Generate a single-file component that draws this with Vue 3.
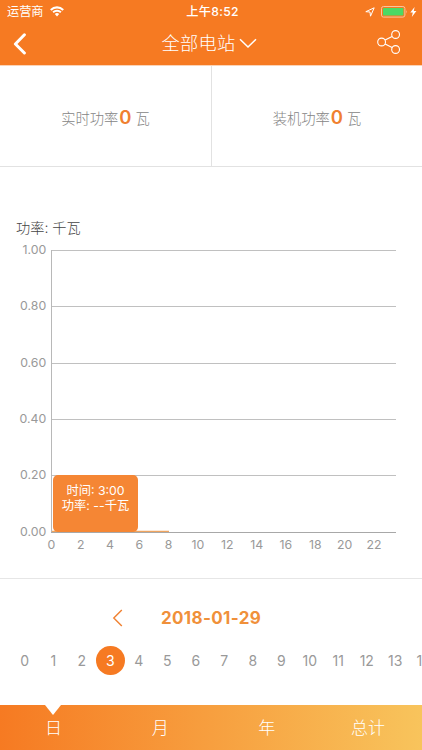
<template>
  <div class="page">
    <header class="header">
      <div class="status">
        <div class="status__left">
          <span>运营商</span>
          <svg width="14" height="11" viewBox="0 0 14 11" fill="none" stroke="#fff">
            <path d="M.8 3.9a9 9 0 0 1 12.4 0" stroke-width="2.1" />
            <path d="M3.1 6.3a5.6 5.6 0 0 1 7.8 0" stroke-width="1.9" />
            <path d="M4.8 8.1a3.1 3.1 0 0 1 4.4 0L7 10.4z" fill="#fff" stroke="none" />
          </svg>
        </div>
        <div class="status__time">上午8:52</div>
        <div class="status__right">
          <svg width="10" height="10" viewBox="0 0 10 10" fill="none" stroke="#fff" stroke-width="1">
            <path d="M.8 4.7 9.2.8 5.5 9.2 5 5z" />
          </svg>
          <svg class="battery" width="27" height="12" viewBox="0 0 27 12">
            <rect x=".5" y=".5" width="23.4" height="10.6" rx="2" fill="none" stroke="#fbc59c" />
            <rect x="2" y="2" width="20.4" height="7.6" rx=".8" fill="#4cd964" />
            <path d="M25 4q1.4 1.8 0 3.6z" fill="#fbc59c" />
          </svg>
          <svg width="7" height="10" viewBox="0 0 7 10">
            <path d="M4.6 0 .3 5.5h2.5L1.8 10l4.6-5.9H3.8z" fill="#fff" />
          </svg>
        </div>
      </div>
      <div class="nav">
        <svg class="nav__back" width="14" height="22" viewBox="0 0 14 22" fill="none" stroke="#fff">
          <path d="M11.4 1.8 2.4 11l9 9" stroke-width="3" stroke-linecap="round" stroke-linejoin="round" />
        </svg>
        <div class="nav__title">
          <span>全部电站</span>
          <svg width="18" height="11" viewBox="0 0 18 11" fill="none" stroke="#fff">
            <path d="M1 1.2 9 9l8-7.8" stroke-width="1.5" />
          </svg>
        </div>
        <svg class="nav__share" width="24" height="26" viewBox="0 0 24 26" fill="none" stroke="#fff" stroke-width="1.1">
          <circle cx="4.6" cy="13" r="3.9" />
          <circle cx="18.6" cy="5.5" r="3.9" />
          <circle cx="18.6" cy="20.5" r="3.9" />
          <path d="M8.1 11.1l7-3.7M8.1 14.9l7 3.7" />
        </svg>
      </div>
    </header>

    <section class="stats">
      <div v-for="stat in stats" :key="stat.label" class="stat">
        {{ stat.label }}<b>{{ stat.value }}</b><span>{{ stat.unit }}</span>
      </div>
    </section>

    <section class="chart">
      <div class="chart__title">功率: 千瓦</div>
      <svg class="chart__plot" width="422" height="314" viewBox="0 0 422 314">
        <g v-for="(label, i) in yLabels" :key="label">
          <line x1="51" x2="396" :y1="gridY(i)" :y2="gridY(i)" :stroke="i === 5 ? '#a8a8a8' : '#c0c0c0'" />
          <text class="axis" x="46.2" :y="gridY(i) + 3.7" text-anchor="end">{{ label }}</text>
        </g>
        <line x1="51.5" x2="51.5" y1="12" y2="294" stroke="#b8b8b8" />
        <line x1="52" x2="169" y1="293.4" y2="293.4" stroke="#efa45f" stroke-width="1.4" />
        <text
          v-for="n in 12"
          :key="n"
          class="axis"
          :x="51.3 + (n - 1) * 29.33"
          y="310.5"
          text-anchor="middle"
        >{{ (n - 1) * 2 }}</text>
      </svg>
      <div class="tooltip">
        <div>时间: 3:00</div>
        <div>功率: --千瓦</div>
      </div>
    </section>

    <section class="picker">
      <div class="date">
        <svg width="11" height="18" viewBox="0 0 11 18" fill="none" stroke="#f08030">
          <path d="M9.8 1 1.8 9l8 8" stroke-width="1.4" />
        </svg>
        <span>2018-01-29</span>
      </div>
      <div class="hours">
        <div
          v-for="hour in hours"
          :key="hour"
          class="hour"
          :class="{ 'hour--active': hour === activeHour }"
          @click="activeHour = hour"
        >
          <span>{{ hour }}</span>
        </div>
      </div>
    </section>

    <nav class="tabs">
      <div
        v-for="tab in tabs"
        :key="tab"
        class="tab"
        :class="{ 'tab--active': tab === activeTab }"
        @click="activeTab = tab"
      >
        {{ tab }}
      </div>
    </nav>
  </div>
</template>

<script setup>
import { ref } from "vue";

const stats = [
  { label: "实时功率", value: 0, unit: "瓦" },
  { label: "装机功率", value: 0, unit: "瓦" },
];

const yLabels = ["1.00", "0.80", "0.60", "0.40", "0.20", "0.00"];
const gridY = (i) => Math.round(12 + i * 56.3) + 0.5;

const hours = Array.from({ length: 15 }, (_, i) => i);
const activeHour = ref(3);

const tabs = ["日", "月", "年", "总计"];
const activeTab = ref("日");
</script>

<style>
body {
  margin: 0;
}
</style>

<style scoped>
.page {
  width: 422px;
  height: 750px;
  display: flex;
  flex-direction: column;
  overflow: hidden;
  background: #fff;
  color: #858585;
  font-family: Inter, "Noto Sans CJK SC", sans-serif;
  font-weight: 300;
}

svg {
  display: block;
  flex: none;
}

.header {
  height: 65px;
  flex: none;
  background: #f67a22;
  border-bottom: 1px solid #fbd3b6;
  color: #fff;
}

.status {
  height: 22px;
  display: grid;
  grid-template-columns: 1fr auto 1fr;
  align-items: center;
  padding: 0 5px 0 7px;
  font-size: 12.2px;
  font-weight: 400;
  line-height: 23px;
}

.status__left,
.status__right {
  display: flex;
  align-items: center;
  gap: 6px;
}

.status__right {
  justify-content: flex-end;
}

.battery {
  margin-right: -4px;
}

.status__time {
  padding-left: 1px;
  font-weight: 500;
  letter-spacing: 0.3px;
}

.nav {
  height: 43px;
  display: grid;
  grid-template-columns: 1fr auto 1fr;
  align-items: center;
  padding: 0 21px 0 13px;
}

.nav__title {
  display: flex;
  align-items: center;
  gap: 4px;
  margin-left: 5px;
  font-size: 18.2px;
  line-height: 38px;
  letter-spacing: 0.3px;
}

.nav__title span {
  margin-top: -1px;
}

.nav__share {
  justify-self: end;
  margin-bottom: 3px;
}

.stats {
  height: 100px;
  flex: none;
  display: grid;
  grid-template-columns: 211px 211px;
  border-bottom: 1px solid #e2e2e2;
}

.stat {
  height: 100px;
  box-sizing: border-box;
  display: flex;
  align-items: baseline;
  justify-content: center;
  font-size: 14.3px;
  line-height: 102px;
}

.stat + .stat {
  border-left: 1px solid #e2e2e2;
}

.stat b {
  margin-left: 1px;
  color: #f08030;
  font-size: 18.5px;
  font-weight: 600;
}

.stat span {
  margin-left: 4px;
}

.chart {
  position: relative;
  height: 411px;
  flex: none;
  border-bottom: 1px solid #e6e6e6;
}

.chart__title {
  padding: 51px 0 0 16px;
  height: 20px;
  line-height: 20px;
  font-size: 14.2px;
  color: #444;
}

.axis {
  font-size: 12.3px;
  font-weight: 400;
  fill: #999;
}

.tooltip {
  position: absolute;
  left: 53px;
  top: 308px;
  width: 85px;
  height: 57px;
  box-sizing: border-box;
  padding-top: 9px;
  border-radius: 5px;
  background: #f58634;
  color: #fff;
  font-size: 12.3px;
  font-weight: 400;
  line-height: 14.5px;
  text-align: center;
}

.picker {
  flex: 1;
}

.date {
  display: flex;
  align-items: center;
  gap: 38px;
  height: 78px;
  padding-left: 112px;
  color: #f0903a;
  font-size: 17px;
  font-weight: 700;
  letter-spacing: 0.35px;
}

.hours {
  display: flex;
  height: 29px;
  margin-top: -11px;
  padding-left: 10.5px;
  font-size: 14px;
  font-weight: 400;
  color: #999;
}

.hour {
  flex: none;
  width: 28.5px;
  height: 29px;
  line-height: 29px;
  text-align: center;
}

.hour--active {
  border-radius: 50%;
  background: #f67a22;
  color: #fff;
}

.tabs {
  height: 45px;
  flex: none;
  display: grid;
  grid-template-columns: 107px 106.5px 106.5px 96px;
  background: linear-gradient(90deg, #f67a22, #f8c45c);
  color: #fff;
  font-size: 17px;
  line-height: 46px;
  text-align: center;
}

.tab--active {
  position: relative;
}

.tab--active::before {
  content: "";
  position: absolute;
  top: 0;
  left: 45px;
  border: 8.5px solid transparent;
  border-top: 10px solid #fff;
  border-bottom: 0;
}
</style>
